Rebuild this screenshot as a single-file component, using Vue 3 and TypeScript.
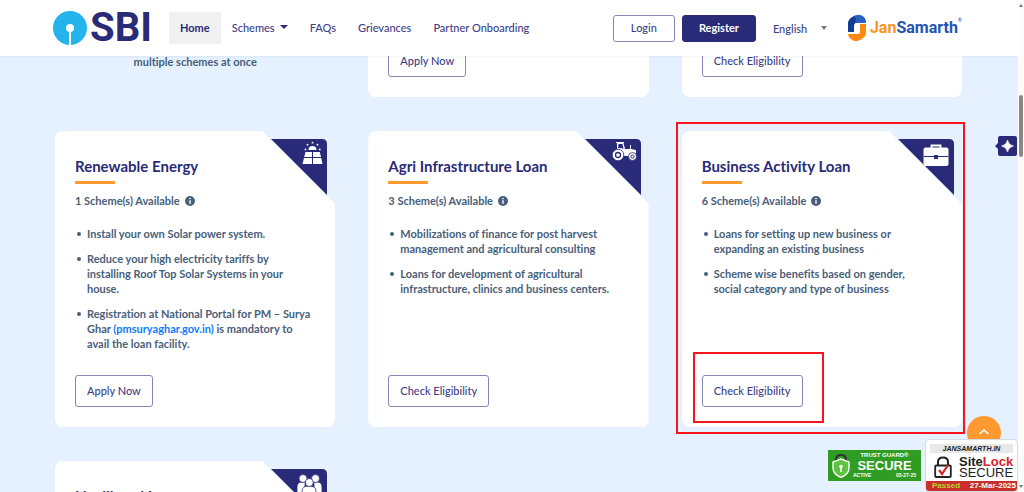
<script setup lang="ts">
import { ref } from 'vue'

type IconName = 'solar' | 'tractor' | 'briefcase' | 'people'

interface Scheme {
  title: string
  count: number
  icon: IconName
  action: string
  marked: boolean
  points: { text: string; link?: string; after?: string }[]
}

const links = ['FAQs', 'Grievances', 'Partner Onboarding']
const language = ref('English')

const schemes: Scheme[] = [
  {
    title: 'Renewable Energy',
    count: 1,
    icon: 'solar',
    action: 'Apply Now',
    marked: false,
    points: [
      { text: 'Install your own Solar power system.' },
      { text: 'Reduce your high electricity tariffs by\ninstalling Roof Top Solar Systems in your\nhouse.' },
      {
        text: 'Registration at National Portal for PM – Surya\nGhar ',
        link: '(pmsuryaghar.gov.in)',
        after: ' is mandatory to\navail the loan facility.',
      },
    ],
  },
  {
    title: 'Agri Infrastructure Loan',
    count: 3,
    icon: 'tractor',
    action: 'Check Eligibility',
    marked: false,
    points: [
      { text: 'Mobilizations of finance for post harvest\nmanagement and agricultural consulting' },
      { text: 'Loans for development of agricultural\ninfrastructure, clinics and business centers.' },
    ],
  },
  {
    title: 'Business Activity Loan',
    count: 6,
    icon: 'briefcase',
    action: 'Check Eligibility',
    marked: true,
    points: [
      { text: 'Loans for setting up new business or\nexpanding an existing business' },
      { text: 'Scheme wise benefits based on gender,\nsocial category and type of business' },
    ],
  },
  {
    title: 'Livelihood Loan',
    count: 1,
    icon: 'people',
    action: 'Check Eligibility',
    marked: false,
    points: [],
  },
]
</script>

<template>
  <div class="page">
    <div class="view">
      <header class="topbar">
        <a class="sbi" href="#" aria-label="SBI">
          <svg class="sbi-mark" viewBox="0 0 34 34" aria-hidden="true">
            <circle cx="17" cy="17" r="17" fill="#22b4ea" />
            <circle cx="17" cy="17" r="4" fill="#fff" />
            <rect x="16" y="18" width="2" height="16" fill="#fff" />
          </svg>
          <span class="sbi-name">SBI</span>
        </a>
        <nav class="nav">
          <a class="nav-link current" href="#">Home</a>
          <a class="nav-link" href="#">Schemes<i class="caret"></i></a>
          <a v-for="l in links" :key="l" class="nav-link" href="#">{{ l }}</a>
        </nav>
        <div class="account">
          <button class="btn login" type="button">Login</button>
          <button class="btn register" type="button">Register</button>
          <label class="lang">
            <select v-model="language" aria-label="Language">
              <option>English</option>
            </select>
            <i class="caret grey"></i>
          </label>
          <a class="jan" href="#" aria-label="JanSamarth">
            <svg class="jan-mark" viewBox="0 0 20 28" aria-hidden="true">
              <path d="M1 18V9Q1 6 4 4Q11-2 17 3Q19 5 19 9H9Q7 9 7 12V18Z" fill="#2a62c4" />
              <path d="M1 18V9Q1 6 4 4L7 2Q10 5 8 9Q7 10 7 12V18Z" fill="#123d91" />
              <path d="M19 10V19Q19 22 16 24Q10 30 4 25Q1 23 1 20H11Q13 20 13 17V10Z" fill="#ff8a0e" />
            </svg>
            <span class="jan-name"><span class="jan-first">Jan</span>Samarth</span>
            <span class="jan-reg">®</span>
          </a>
        </div>
      </header>

      <main class="main">
        <section class="grid row-above">
          <p class="lead">multiple schemes at once</p>
          <div class="tail"><button class="btn" type="button">Apply Now</button></div>
          <div class="tail"><button class="btn" type="button">Check Eligibility</button></div>
        </section>

        <section class="grid">
          <article v-for="s in schemes" :key="s.title" class="slot">
            <div class="card">
              <h2>{{ s.title }}</h2>
              <div class="rule"></div>
              <p class="count">
                {{ s.count }} Scheme(s) Available
                <svg class="info" viewBox="0 0 10 10" aria-hidden="true">
                  <circle cx="5" cy="5" r="5" fill="#48607a" />
                  <path d="M5 4.200V7.800" stroke="#fff" stroke-width="1.400" />
                  <circle cx="5" cy="2.600" r=".8" fill="#fff" />
                </svg>
              </p>
              <ul>
                <li v-for="p in s.points" :key="p.text">{{ p.text }}<a v-if="p.link" href="#">{{ p.link }}</a>{{ p.after }}</li>
              </ul>
              <div class="action">
                <button class="btn" type="button">{{ s.action }}</button>
                <span v-if="s.marked" class="mark mark-button"></span>
              </div>
            </div>
            <svg class="corner" viewBox="0 0 56 56" aria-hidden="true">
              <path d="M0 0H51Q56 0 56 5V56Z" fill="#292b78" />
              <g v-if="s.icon === 'solar'" fill="#fff">
                <path d="M37.500 11A4 4 0 0 1 45.500 11Z" />
                <circle cx="41.500" cy="3.700" r=".9" />
                <circle cx="36.500" cy="5.700" r=".9" />
                <circle cx="46.500" cy="5.700" r=".9" />
                <circle cx="34.500" cy="10.400" r=".9" />
                <circle cx="48.800" cy="10.400" r=".9" />
                <path d="M34.500 13H41V18H33.200ZM42 13H48.800L50 18H42ZM33 19H41V25H31.500ZM42 19H50.200L51.500 25H42Z" />
              </g>
              <g v-else-if="s.icon === 'tractor'">
                <path d="M31 3H39V4H38.500L40 10H45V6H46V10L51 11V17H34L30 12L32 10V4H31Z" fill="#fff" />
                <path d="M33.500 5H37.500L38.500 10L36 9H33Z" fill="#292b78" />
                <circle cx="33" cy="16" r="5.800" fill="#fff" stroke="#292b78" stroke-width=".8" />
                <circle cx="33" cy="16" r="2.500" fill="#fff" stroke="#292b78" stroke-width="1.300" />
                <circle cx="47.500" cy="17.500" r="4" fill="#fff" stroke="#292b78" stroke-width=".8" />
                <circle cx="47.500" cy="17.500" r="1.600" fill="#fff" stroke="#292b78" />
              </g>
              <g v-else-if="s.icon === 'briefcase'">
                <path d="M33.500 9V6.500H42.500V9" fill="none" stroke="#fff" stroke-width="1.800" />
                <rect x="25.500" y="8.500" width="25" height="18.500" rx="2" fill="#fff" />
                <path d="M25.500 17.500H36M40 17.500H50.500" stroke="#292b78" />
                <rect x="36" y="16" width="4" height="4" fill="#292b78" />
              </g>
              <g v-else fill="#fff" stroke="#292b78" stroke-width=".8">
                <path d="M26 24V18Q26 13 31 13H34V25H26ZM51 24V18Q51 13 46 13H43V25H51Z" />
                <circle cx="32" cy="9.500" r="4" />
                <circle cx="44.500" cy="9.500" r="4" />
                <path d="M31 28V22Q31 17 38 17Q45 17 45 22V28Z" />
                <circle cx="38.300" cy="13.500" r="4" />
              </g>
            </svg>
            <span v-if="s.marked" class="mark mark-card"></span>
          </article>
        </section>
      </main>

      <button class="assist" type="button" aria-label="Assistant">
        <svg viewBox="0 0 22 20" aria-hidden="true">
          <path d="M5 0H20Q22 0 22 2V18Q22 20 20 20H5Q3 20 3 18V13L0 10L3 7V2Q3 0 5 0Z" fill="#292b78" />
          <path d="M12.500 4Q13.500 9 18.500 10Q13.500 11 12.500 16Q11.500 11 6.500 10Q11.500 9 12.500 4Z" fill="#fff" stroke="#fff" stroke-width=".6" />
        </svg>
      </button>
      <button class="to-top" type="button" aria-label="Back to top">
        <svg viewBox="0 0 12 8" aria-hidden="true">
          <path d="M1.500 6L6 2L10.500 6" fill="none" stroke="#fff" stroke-width="1.600" />
        </svg>
      </button>
      <a class="trust" href="#">
        <svg viewBox="0 0 18 24" aria-hidden="true">
          <path d="M4 9V6Q4 1 9 1Q14 1 14 6V9" fill="none" stroke="#333" stroke-width="2.200" />
          <path d="M9 5L17 8V14Q17 20 9 23.500Q1 20 1 14V8Z" fill="#5cc43e" stroke="#fff" stroke-width="1.400" />
          <circle cx="9" cy="12.500" r="1.800" fill="#fff" />
          <path d="M9 13V18" stroke="#fff" stroke-width="1.600" />
        </svg>
        <span class="trust-text">
          <span class="trust-brand">TRUST GUARD®</span>
          <span class="trust-word">SECURE</span>
          <span class="trust-foot"><span>ACTIVE</span><span>03-27-25</span></span>
        </span>
      </a>
      <a class="sitelock" href="#">
        <span class="sl-host">JANSAMARTH.IN</span>
        <span class="sl-body">
          <svg viewBox="0 0 18 22" aria-hidden="true">
            <path d="M4 10V6Q4 1.500 9 1.500Q14 1.500 14 6V10" fill="none" stroke="#222" stroke-width="2" />
            <rect x="1.200" y="9.500" width="15.600" height="11.500" rx="1" fill="#fff" stroke="#222" stroke-width="1.800" />
            <path d="M5 14L8 18L14 9" fill="none" stroke="#d8232a" stroke-width="2.200" />
          </svg>
          <span class="sl-name"><b>Site<em>Lock</em></b><span>SECURE</span></span>
        </span>
        <span class="sl-foot"><span class="sl-pass">Passed</span><span>27-Mar-2025</span></span>
      </a>
    </div>
    <div class="scroll" aria-hidden="true">
      <i class="arrow up"></i>
      <i class="thumb"></i>
      <i class="arrow down"></i>
    </div>
  </div>
</template>

<style>
body {
  margin: 0;
}
</style>

<style scoped>
.page {
  display: flex;
  height: 100vh;
  overflow: hidden;
  background: #e5f1ff;
  font-family: Lato, "Liberation Sans", sans-serif;
  font-size: 11px;
  font-weight: 500;
  font-variant-ligatures: none;
  color: #48607a;
}
.page *,
.page *::before {
  box-sizing: border-box;
}
.view {
  position: relative;
  flex: 1;
  min-width: 0;
  overflow: hidden;
}
a {
  text-decoration: none;
}
p,
h2,
ul {
  margin: 0;
  padding: 0;
}
button,
select {
  font: inherit;
}

.topbar {
  position: relative;
  z-index: 2;
  display: flex;
  align-items: center;
  height: 56px;
  padding: 0 56px 0 53px;
  background: #fff;
  box-shadow: 0 1px 2px rgba(40, 60, 100, 0.06);
}
.sbi {
  display: flex;
  align-items: center;
  gap: 3px;
  width: 116px;
}
.sbi-mark {
  width: 34px;
  height: 34px;
}
.sbi-name {
  font: bold 40px/56px Roboto, "Liberation Sans", sans-serif;
  color: #292b78;
}
.nav {
  display: flex;
  align-items: center;
}
.nav-link {
  display: flex;
  align-items: center;
  height: 32px;
  padding: 0 11px 2px;
  color: #3d3f88;
  white-space: nowrap;
}
.nav-link.current {
  border-radius: 2px;
  background: #f1f1f1;
  color: #292b78;
  font-weight: 700;
}
.caret {
  margin-left: 5px;
  border: 4px solid transparent;
  border-top: 4px solid #292b78;
  border-bottom: 0;
}
.caret.grey {
  margin: 0;
  border-width: 4px 3px 0;
  border-top-color: #777;
}
.account {
  display: flex;
  align-items: center;
  margin-left: auto;
}
.btn {
  height: 32px;
  padding: 0 11px 2px;
  border: 1px solid #8486b5;
  border-radius: 3px;
  background: #fff;
  color: #3d3f88;
  white-space: nowrap;
}
.btn.login {
  width: 62px;
  height: 27px;
}
.btn.register {
  width: 74px;
  height: 27px;
  margin-left: 7px;
  border-color: #292b78;
  background: #292b78;
  color: #fff;
  font-weight: 700;
}
.lang {
  display: flex;
  align-items: center;
  margin: 0 20px 0 17px;
}
.lang select {
  width: 48px;
  padding: 0;
  border: 0;
  appearance: none;
  background: none;
  color: #3d3f88;
}
.jan {
  display: flex;
  align-items: center;
  gap: 3px;
  color: #2453b5;
}
.jan-mark {
  width: 20px;
  height: 28px;
}
.jan-name {
  font: bold 16px/28px Roboto, "Liberation Sans", sans-serif;
}
.jan-first {
  color: #ff9420;
}
.jan-reg {
  align-self: flex-start;
  margin-left: -3px;
  padding-top: 3px;
  font-size: 5px;
}

.main {
  margin-top: -11px;
}
.grid {
  display: grid;
  grid-template-columns: repeat(3, 1fr);
  gap: 34px 33px;
  padding: 0 56px 0 55px;
}
.row-above {
  margin-bottom: 34px;
}
.lead {
  padding-top: 9px;
  font-weight: 700;
  line-height: 16px;
  text-align: center;
}
.tail {
  padding: 0 20px 20px;
  border-radius: 0 0 8px 8px;
  background: #fff;
}
.slot {
  position: relative;
  display: flex;
}
.card {
  display: flex;
  flex: 1;
  flex-direction: column;
  padding: 24px 20px 20px;
  border-radius: 8px;
  background: #fff;
  clip-path: polygon(0 0, calc(100% - 73px) 0, 100% 73px, 100% 100%, 0 100%);
}
h2 {
  font-size: 15px;
  line-height: 22px;
  font-weight: 700;
  color: #292b78;
}
.rule {
  width: 40px;
  height: 3px;
  margin-top: 4px;
  background: #ff9a30;
}
.count {
  display: flex;
  align-items: center;
  gap: 5px;
  margin-top: 9px;
  font-weight: 700;
  line-height: 16px;
}
.info {
  width: 10px;
  height: 10px;
}
ul {
  display: flex;
  flex: 1;
  flex-direction: column;
  gap: 10px;
  margin-top: 17px;
  list-style: none;
}
li {
  position: relative;
  padding-left: 12px;
  font-weight: 700;
  line-height: 15px;
  white-space: pre-line;
}
li::before {
  content: "";
  position: absolute;
  left: 2px;
  top: 6px;
  width: 4px;
  height: 4px;
  border-radius: 50%;
  background: #48607a;
}
li a {
  color: #0d7bff;
}
.action {
  position: relative;
  align-self: flex-start;
  margin-top: 24px;
}
.action .btn {
  display: block;
}
.corner {
  position: absolute;
  top: 8px;
  right: 8px;
  width: 56px;
  height: 56px;
}
.mark {
  position: absolute;
  border: 2px solid #f8141c;
  pointer-events: none;
}
.mark-card {
  inset: -9px -3px -7px -6px;
}
.mark-button {
  inset: -23px -21px -16px -9px;
}

.assist {
  position: absolute;
  top: 136px;
  right: 1px;
  width: 22px;
  height: 20px;
  padding: 0;
  border: 0;
  background: none;
}
.assist svg {
  display: block;
}
.to-top {
  position: absolute;
  right: 17px;
  bottom: 42px;
  display: flex;
  justify-content: center;
  width: 34px;
  height: 34px;
  padding: 12px 0 0;
  border: 0;
  border-radius: 50%;
  background: #ff9a30;
}
.to-top svg {
  width: 12px;
  height: 8px;
}
.trust {
  position: absolute;
  right: 97px;
  bottom: 11px;
  display: flex;
  align-items: center;
  gap: 3px;
  width: 93px;
  height: 31px;
  padding: 0 5px 0 4px;
  background: #2f9c24;
  color: #fff;
  font-family: "Liberation Sans", sans-serif;
  font-weight: 700;
}
.trust svg {
  width: 18px;
  height: 24px;
}
.trust-text {
  display: flex;
  flex: 1;
  flex-direction: column;
  align-items: center;
}
.trust-brand {
  font-size: 6px;
  line-height: 7px;
}
.trust-word {
  font-size: 13px;
  line-height: 13px;
}
.trust-foot {
  display: flex;
  justify-content: space-between;
  align-self: stretch;
  font-size: 5px;
  line-height: 7px;
}
.sitelock {
  position: absolute;
  right: 0;
  bottom: 0;
  display: flex;
  flex-direction: column;
  width: 93px;
  height: 53px;
  border: 1px solid #d8dbe2;
  border-radius: 4px;
  background: #fff;
  color: #222;
  font-family: "Liberation Sans", sans-serif;
  overflow: hidden;
}
.sl-host {
  margin: 4px 4px 0;
  background: #e8e8e8;
  font-size: 7px;
  font-weight: 700;
  font-style: italic;
  line-height: 9px;
  text-align: center;
}
.sl-body {
  display: flex;
  flex: 1;
  align-items: center;
  gap: 7px;
  padding-left: 8px;
}
.sl-body svg {
  width: 18px;
  height: 22px;
}
.sl-name {
  display: flex;
  flex-direction: column;
  font-size: 13px;
  line-height: 11px;
}
.sl-name em {
  color: #d8232a;
  font-style: normal;
}
.sl-foot {
  display: flex;
  justify-content: space-between;
  padding: 0 1px 0 6px;
  background: #c9302c;
  color: #fff;
  font-size: 8px;
  font-weight: 700;
  line-height: 10px;
}
.sl-pass {
  color: #b9d532;
}

.scroll {
  display: flex;
  flex-direction: column;
  align-items: center;
  width: 6px;
  padding: 4px 0;
  background: #fcfcfc;
}
.thumb {
  width: 4px;
  height: 62px;
  margin-top: 88px;
  border-radius: 2px;
  background: #888;
}
.arrow {
  border: 2px solid transparent;
}
.arrow.up {
  border-top: 0;
  border-bottom: 3px solid #777;
}
.arrow.down {
  margin-top: auto;
  border-bottom: 0;
  border-top: 3px solid #777;
}
</style>
